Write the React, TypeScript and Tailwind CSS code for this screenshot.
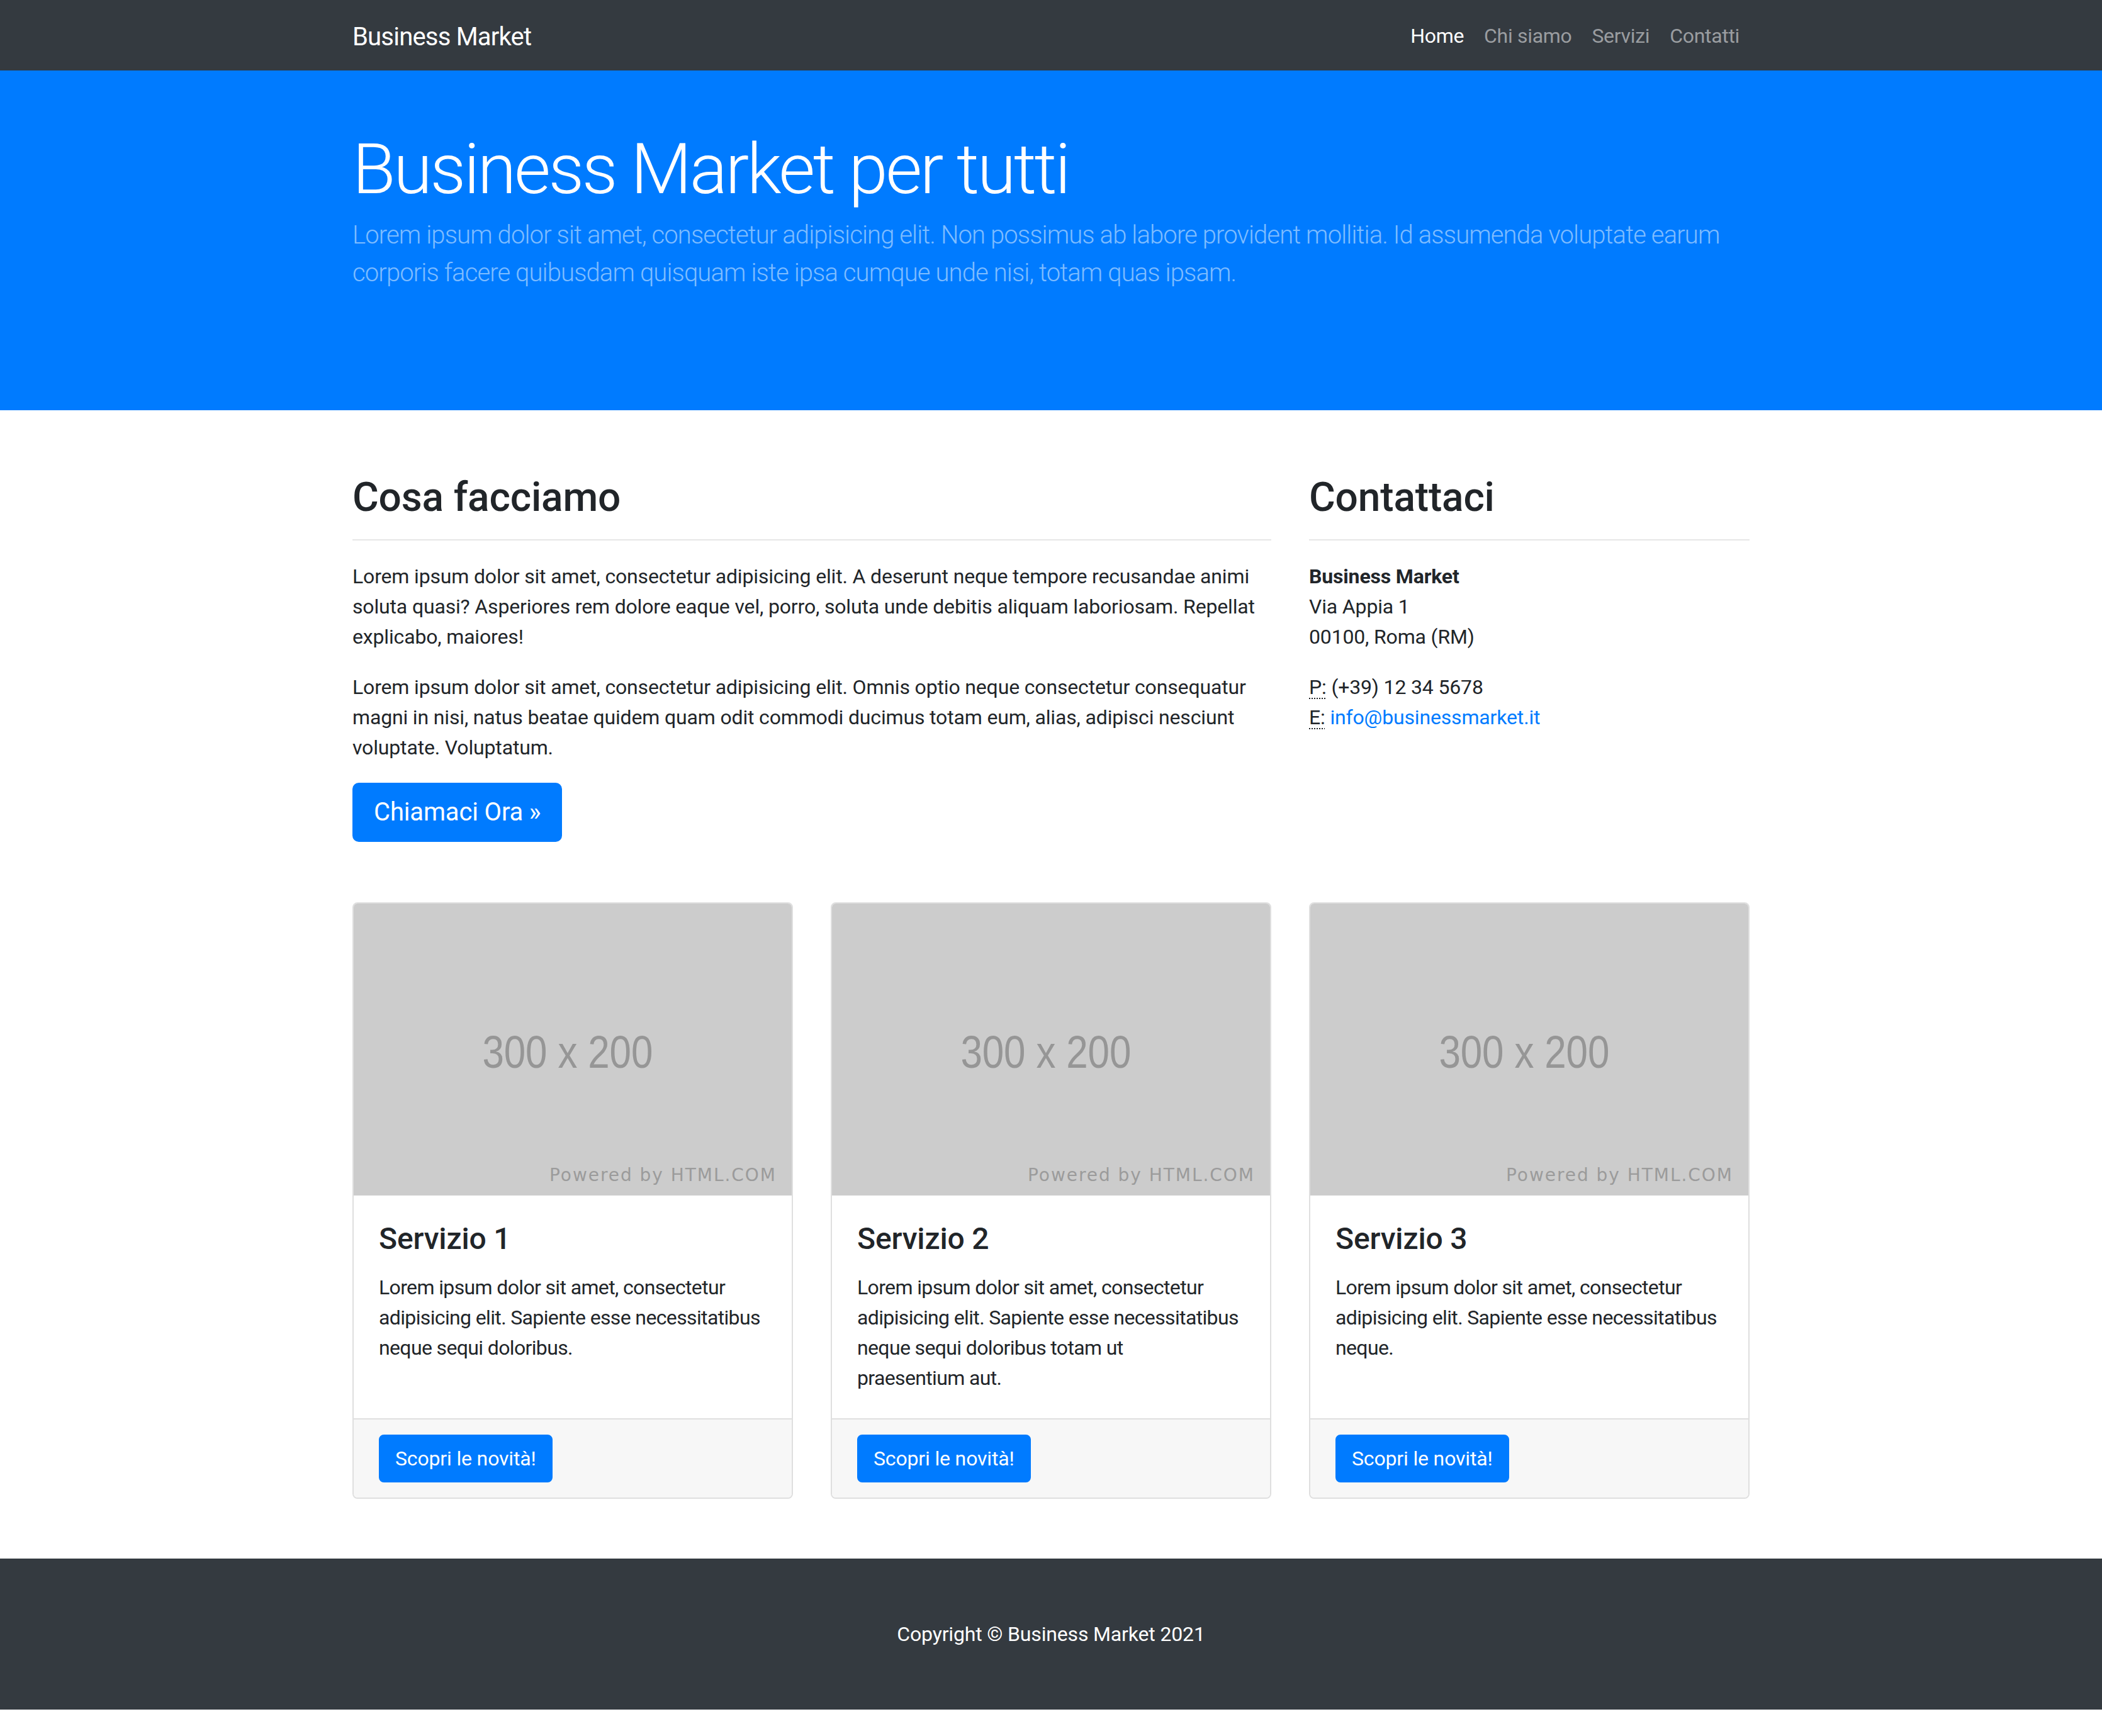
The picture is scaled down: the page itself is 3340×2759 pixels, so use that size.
import React from 'react';

const services = [
    {
        title: 'Servizio 1',
        text: 'Lorem ipsum dolor sit amet, consectetur adipisicing elit. Sapiente esse necessitatibus neque sequi doloribus.',
        wrap: '',
    },
    {
        title: 'Servizio 2',
        text: 'Lorem ipsum dolor sit amet, consectetur adipisicing elit. Sapiente esse necessitatibus neque sequi doloribus totam ut praesentium aut.',
        wrap: 'text-pretty',
    },
    {
        title: 'Servizio 3',
        text: 'Lorem ipsum dolor sit amet, consectetur adipisicing elit. Sapiente esse necessitatibus neque.',
        wrap: '',
    },
];

const navLinks = ['Home', 'Chi siamo', 'Servizi', 'Contatti'];

// placeholder picture, like the 300x200 one from html.com
const Placeholder: React.FC = () => (
    <div className="relative h-[464px] bg-[#cccccc] flex items-center justify-center">
        <span className="mt-[8px] pr-[20px] text-[72px] leading-none text-[#969696] font-['Liberation_Sans',Arial,sans-serif] scale-x-[0.86]">
            300 x 200
        </span>
        <span className="absolute right-[24px] bottom-[18px] text-[28px] leading-none tracking-[0.07em] text-[#9b9b9b] font-['DejaVu_Sans',Verdana,sans-serif]">
            Powered by HTML.COM
        </span>
    </div>
);

const App: React.FC = () => {
    return (
        <div className="min-h-screen bg-white text-[#212529] tracking-[-0.01em] font-['Roboto','Liberation_Sans',sans-serif]">
            {/* navbar */}
            <nav className="h-[112px] bg-[#343a40]">
                <div className="mx-auto flex h-full w-[2220px] items-center justify-between">
                    <a href="#" className="mt-[6px] text-[40px] leading-[60px] tracking-[-0.02em] text-white">
                        Business Market
                    </a>
                    <ul className="mt-[2px] flex text-[32px] leading-[48px] tracking-[-0.01em]">
                        {navLinks.map((link, i) => (
                            <li key={link}>
                                <a
                                    href="#"
                                    className={i === 0 ? 'block px-[16px] text-white' : 'block px-[16px] text-[#9a9da0]'}
                                >
                                    {link}
                                </a>
                            </li>
                        ))}
                    </ul>
                </div>
            </nav>

            {/* jumbotron */}
            <header className="bg-[#007bff] pt-[90px] pb-[188px]">
                <div className="mx-auto w-[2220px]">
                    <h1 className="mb-[8px] text-[112px] font-light leading-[1.2] tracking-[-0.03em] text-white">
                        Business Market per tutti
                    </h1>
                    <p className="text-[40px] font-light leading-[60px] tracking-[-0.022em] text-white/50">
                        Lorem ipsum dolor sit amet, consectetur adipisicing elit. Non possimus ab labore provident
                        mollitia. Id assumenda voluptate earum corporis facere quibusdam quisquam iste ipsa cumque unde
                        nisi, totam quas ipsam.
                    </p>
                </div>
            </header>

            <main className="mx-auto w-[2220px] pt-[101px] pb-[95px]">
                <div className="flex gap-[60px]">
                    <section className="w-[1460px]">
                        <h2 className="mb-[27px] text-[64px] font-medium leading-[1.2]">Cosa facciamo</h2>
                        <hr className="mb-[33px] border-t-2 border-[#e6e6e6]" />
                        <p className="mb-[32px] text-[32px] leading-[48px]">
                            Lorem ipsum dolor sit amet, consectetur adipisicing elit. A deserunt neque tempore recusandae
                            animi soluta quasi? Asperiores rem dolore eaque vel, porro, soluta unde debitis aliquam
                            laboriosam. Repellat explicabo, maiores!
                        </p>
                        <p className="mb-[32px] text-[32px] leading-[48px]">
                            Lorem ipsum dolor sit amet, consectetur adipisicing elit. Omnis optio neque consectetur
                            consequatur magni in nisi, natus beatae quidem quam odit commodi ducimus totam eum, alias,
                            adipisci nesciunt voluptate. Voluptatum.
                        </p>
                        <a
                            href="#"
                            className="inline-block rounded-[10px] border-2 border-[#007bff] bg-[#007bff] px-[32px] py-[15px] text-[40px] leading-[60px] text-white"
                        >
                            Chiamaci Ora &raquo;
                        </a>
                    </section>

                    <section className="w-[700px]">
                        <h2 className="mb-[27px] text-[64px] font-medium leading-[1.2]">Contattaci</h2>
                        <hr className="mb-[33px] border-t-2 border-[#e6e6e6]" />
                        <address className="mb-[32px] text-[32px] not-italic leading-[48px]">
                            <strong className="font-bold">Business Market</strong>
                            <br />
                            Via Appia 1
                            <br />
                            00100, Roma (RM)
                        </address>
                        <address className="text-[32px] not-italic leading-[48px]">
                            <abbr title="Phone" className="underline decoration-dotted decoration-2 underline-offset-[6px]">
                                P:
                            </abbr>{' '}
                            (+39) 12 34 5678
                            <br />
                            <abbr title="Email" className="underline decoration-dotted decoration-2 underline-offset-[6px]">
                                E:
                            </abbr>{' '}
                            <a href="#" className="text-[#007bff]">
                                info@businessmarket.it
                            </a>
                        </address>
                    </section>
                </div>

                {/* services */}
                <div className="mt-[96px] grid grid-cols-3 gap-[60px]">
                    {services.map((service) => (
                        <div
                            key={service.title}
                            className="flex flex-col overflow-hidden rounded-[8px] border-2 border-[#dfdfdf] bg-white"
                        >
                            <Placeholder />
                            <div className="flex-1 p-[40px]">
                                <h4 className="mb-[24px] text-[48px] font-medium leading-[1.2]">{service.title}</h4>
                                <p className={`text-[32px] leading-[48px] tracking-[-0.02em] ${service.wrap}`}>
                                    {service.text}
                                </p>
                            </div>
                            <div className="border-t-2 border-[#dfdfdf] bg-[#f7f7f7] px-[40px] py-[24px]">
                                <a
                                    href="#"
                                    className="inline-block rounded-[8px] border-2 border-[#007bff] bg-[#007bff] px-[24px] py-[12px] text-[32px] leading-[48px] text-white"
                                >
                                    Scopri le novità!
                                </a>
                            </div>
                        </div>
                    ))}
                </div>
            </main>

            <footer className="bg-[#343a40] py-[96px]">
                <p className="text-center text-[32px] leading-[48px] text-white">Copyright &copy; Business Market 2021</p>
            </footer>
        </div>
    );
};

export default App;
